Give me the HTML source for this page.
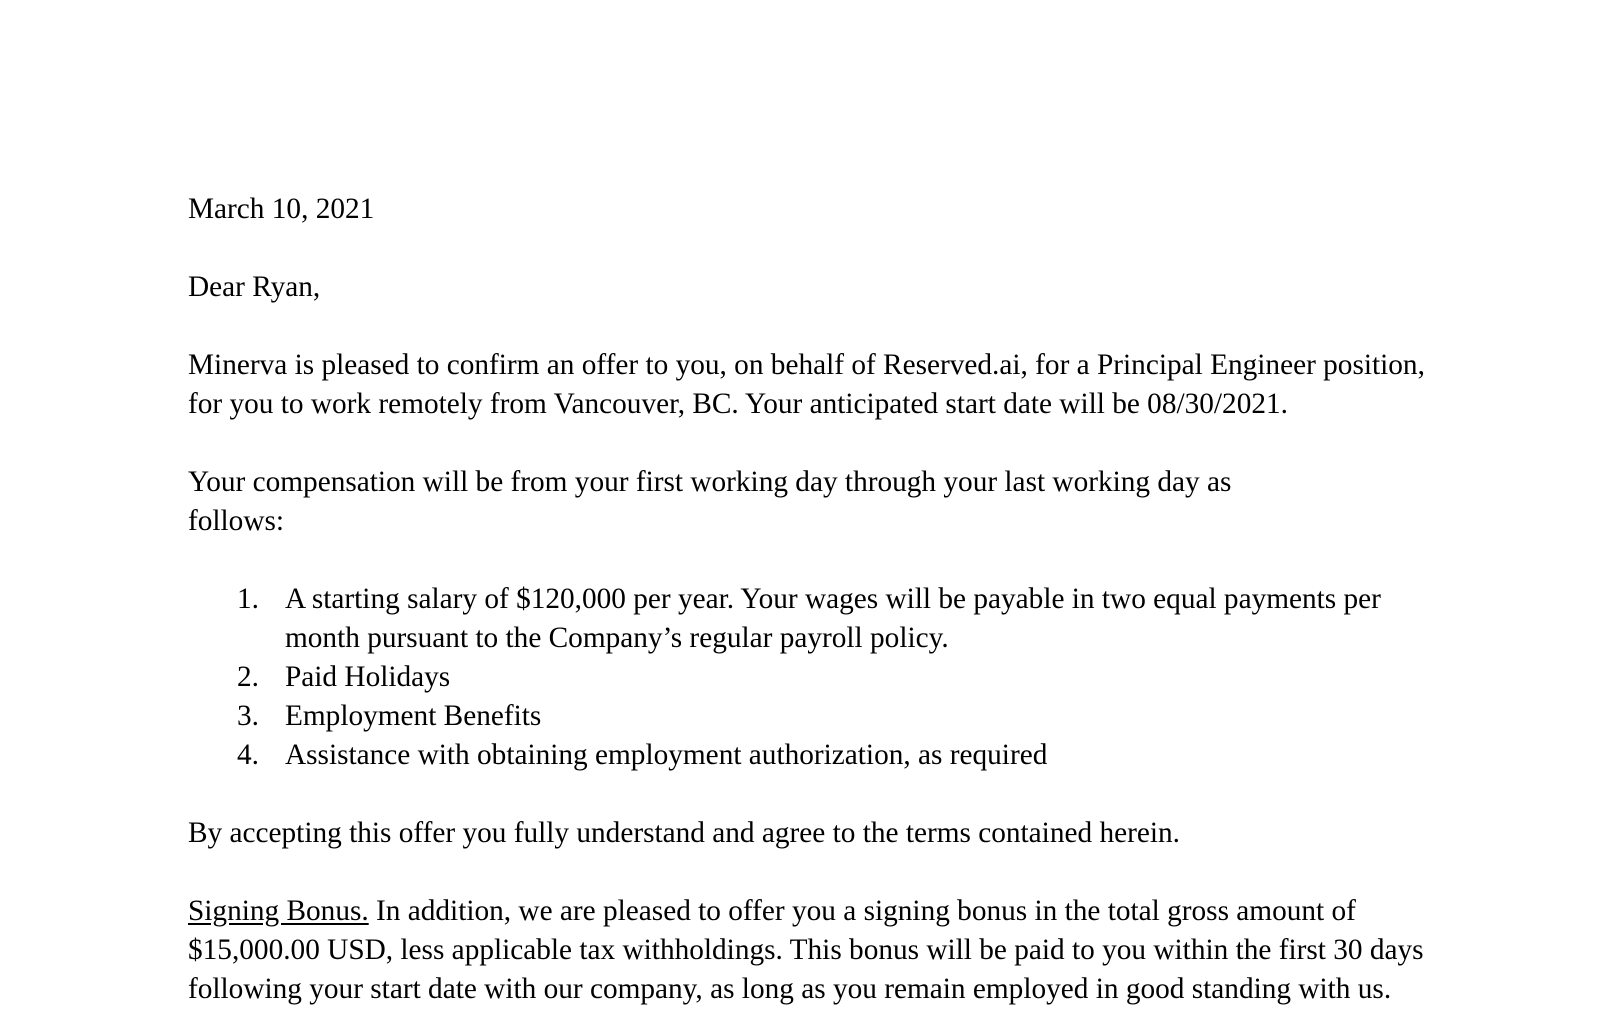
<!DOCTYPE html>
<html><head><meta charset="utf-8"><style>
html,body{margin:0;padding:0;background:#fff;width:1624px;height:974px;overflow:hidden}
.doc{position:absolute;left:188px;top:190px;width:1400px;font-family:"Liberation Serif","Times New Roman",serif;font-size:29.3px;line-height:39px;color:#000}
.l{white-space:nowrap;height:39px}
.li{position:relative;padding-left:97px}
.li .n{position:absolute;left:49px}
u{text-underline-offset:3px}
</style></head><body><div class="doc">
<div class="l">March 10, 2021</div>
<div class="l"></div>
<div class="l">Dear Ryan,</div>
<div class="l"></div>
<div class="l">Minerva is pleased to confirm an offer to you, on behalf of Reserved.ai, for a Principal Engineer position,</div>
<div class="l">for you to work remotely from Vancouver, BC. Your anticipated start date will be 08/30/2021.</div>
<div class="l"></div>
<div class="l">Your compensation will be from your first working day through your last working day as</div>
<div class="l">follows:</div>
<div class="l"></div>
<div class="l li"><span class="n">1.</span>A starting salary of $120,000 per year. Your wages will be payable in two equal payments per</div>
<div class="l li">month pursuant to the Company’s regular payroll policy.</div>
<div class="l li"><span class="n">2.</span>Paid Holidays</div>
<div class="l li"><span class="n">3.</span>Employment Benefits</div>
<div class="l li"><span class="n">4.</span>Assistance with obtaining employment authorization, as required</div>
<div class="l"></div>
<div class="l">By accepting this offer you fully understand and agree to the terms contained herein.</div>
<div class="l"></div>
<div class="l"><u>Signing Bonus.</u> In addition, we are pleased to offer you a signing bonus in the total gross amount of</div>
<div class="l">$15,000.00 USD, less applicable tax withholdings. This bonus will be paid to you within the first 30 days</div>
<div class="l">following your start date with our company, as long as you remain employed in good standing with us.</div>
</div></body></html>
